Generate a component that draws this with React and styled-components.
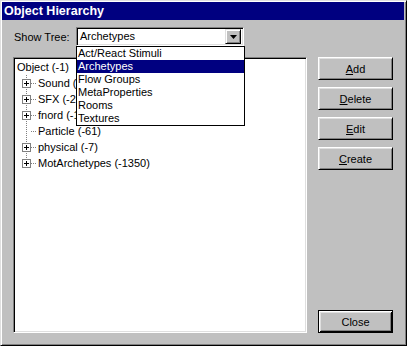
import styled, { createGlobalStyle, css } from "styled-components";

const GlobalStyle = createGlobalStyle`
  html, body {
    margin: 0;
    padding: 0;
    background: #c0c0c0;
  }
  body {
    font-family: "Liberation Sans", Arial, sans-serif;
    font-size: 11px;
    color: #000;
  }
`

const Window = styled.div`
  box-sizing: border-box;
  width: 407px;
  height: 346px;
  background: #c0c0c0;
  border: 1px solid;
  border-color: #dfdfdf #000 #000 #dfdfdf;
  box-shadow: inset 1px 1px #fff, inset -1px -1px #808080;
  padding: 1px 2px 2px 1px;
  display: flex;
  flex-direction: column;
`
const TitleBar = styled.div`
  height: 18px;
  background: #000080;
  color: #fff;
  font-weight: bold;
  font-size: 12.5px;
  line-height: 18px;
  padding-left: 2px;
  white-space: nowrap;
`
const Content = styled.div`
  flex: 1;
  display: flex;
  flex-direction: column;
  padding: 7px 11px 10px 11px;
`
const TopRow = styled.div`
  display: flex;
  align-items: center;
  height: 19px;
`
const Label = styled.span`
  width: 62px;
  padding-left: 1px;
`
const Combo = styled.div`
  position: relative;
  box-sizing: border-box;
  width: 168px;
  height: 19px;
  background: #fff;
  border: 1px solid;
  border-color: #808080 #fff #fff #808080;
  box-shadow: inset 1px 1px #000, inset -1px -1px #dfdfdf;
  display: flex;
  align-items: center;
  padding: 2px 2px 2px 3px;
`
const ComboText = styled.span`
  flex: 1;
  line-height: 15px;
`
const DropButton = styled.div`
  box-sizing: border-box;
  width: 16px;
  height: 15px;
  background: #c0c0c0;
  border: 1px solid;
  border-color: #dfdfdf #000 #000 #dfdfdf;
  box-shadow: inset 1px 1px #fff, inset -1px -1px #808080;
  display: flex;
  align-items: center;
  justify-content: center;
`
const DropList = styled.ul`
  position: absolute;
  left: -1px;
  top: 18px;
  box-sizing: border-box;
  width: 169px;
  margin: 0;
  padding: 0;
  list-style: none;
  background: #fff;
  border: 1px solid #000;
  z-index: 2;
`
const DropItem = styled.li`
  height: 13px;
  line-height: 13px;
  padding-left: 1px;
  white-space: nowrap;
  ${p => p.selected && css`
    background: #000080;
    color: #fff;
  `}
`
const Main = styled.div`
  flex: 1;
  display: flex;
  margin-top: 11px;
`
const TreeBox = styled.div`
  box-sizing: border-box;
  width: 294px;
  height: 276px;
  background: #fff;
  border: 1px solid;
  border-color: #808080 #fff #fff #808080;
  box-shadow: inset 1px 1px #000, inset -1px -1px #dfdfdf;
  padding: 1px 1px 1px 3px;
`
const TreeRow = styled.div`
  display: flex;
  align-items: center;
  height: 16px;
  line-height: 16px;
  white-space: nowrap;
`
const RowText = styled.span`
  margin-left: ${p => (p.child ? "1px" : "0")};
`
const ButtonColumn = styled.div`
  margin-left: 11px;
  width: 75px;
  display: flex;
  flex-direction: column;
  gap: 7px;
`
const Button = styled.div`
  box-sizing: border-box;
  height: 23px;
  background: #c0c0c0;
  display: flex;
  align-items: center;
  justify-content: center;
  border: 1px solid;
  border-color: #fff #000 #000 #fff;
  box-shadow: inset 1px 1px #dfdfdf, inset -1px -1px #808080;
  ${p => p.isDefault && css`
    margin-top: auto;
    border: 1px solid #000;
    box-shadow: inset 1px 1px #fff, inset -1px -1px #000, inset 2px 2px #dfdfdf, inset -2px -2px #808080;
  `}
`

function Dots({ x, y1, y2 }) {
  const out = [];
  for (let y = y1; y < y2; y += 2) out.push(<rect key={y} x={x} y={y} width="1" height="1" fill="#808080" />);
  return out;
}
function HDots({ y, x1, x2 }) {
  const out = [];
  for (let x = x1; x < x2; x += 2) out.push(<rect key={x} x={x} y={y} width="1" height="1" fill="#808080" />);
  return out;
}

function Branch({ expandable, last }) {
  return (
    <svg width="20" height="16" viewBox="0 0 20 16">
      <Dots x={9} y1={0} y2={last ? 8 : 16} />
      <HDots y={8} x1={14} x2={19} />
      {expandable && (
        <g>
          <rect x="5.5" y="4.5" width="8" height="8" fill="#fff" stroke="#808080" />
          <rect x="7" y="8" width="5" height="1" fill="#000" />
          <rect x="9" y="6" width="1" height="5" fill="#000" />
        </g>
      )}
    </svg>
  );
}

const items = ["Act/React Stimuli", "Archetypes", "Flow Groups", "MetaProperties", "Rooms", "Textures"];
const nodes = [
  { name: "Sound (-2)", expandable: true },
  { name: "SFX (-2000)", expandable: true },
  { name: "fnord (-1)", expandable: true },
  { name: "Particle (-61)", expandable: false },
  { name: "physical (-7)", expandable: true },
  { name: "MotArchetypes (-1350)", expandable: true },
];

export default function App() {
  return (
    <>
      <GlobalStyle />
      <Window>
        <TitleBar>Object Hierarchy</TitleBar>
        <Content>
          <TopRow>
            <Label>Show Tree:</Label>
            <Combo>
              <ComboText>Archetypes</ComboText>
              <DropButton>
                <svg width="7" height="4" viewBox="0 0 7 4">
                  <path d="M0 0h7L3.5 4z" fill="#000" />
                </svg>
              </DropButton>
              <DropList>
                {items.map(item => (
                  <DropItem key={item} selected={item === "Archetypes"}>{item}</DropItem>
                ))}
              </DropList>
            </Combo>
          </TopRow>
          <Main>
            <TreeBox>
              <TreeRow>
                <RowText>Object (-1)</RowText>
              </TreeRow>
              {nodes.map((n, i) => (
                <TreeRow key={n.name}>
                  <Branch expandable={n.expandable} last={i === nodes.length - 1} />
                  <RowText child>{n.name}</RowText>
                </TreeRow>
              ))}
            </TreeBox>
            <ButtonColumn>
              <Button><span><u>A</u>dd</span></Button>
              <Button><span><u>D</u>elete</span></Button>
              <Button><span><u>E</u>dit</span></Button>
              <Button><span><u>C</u>reate</span></Button>
              <Button isDefault>Close</Button>
            </ButtonColumn>
          </Main>
        </Content>
      </Window>
    </>
  );
}
